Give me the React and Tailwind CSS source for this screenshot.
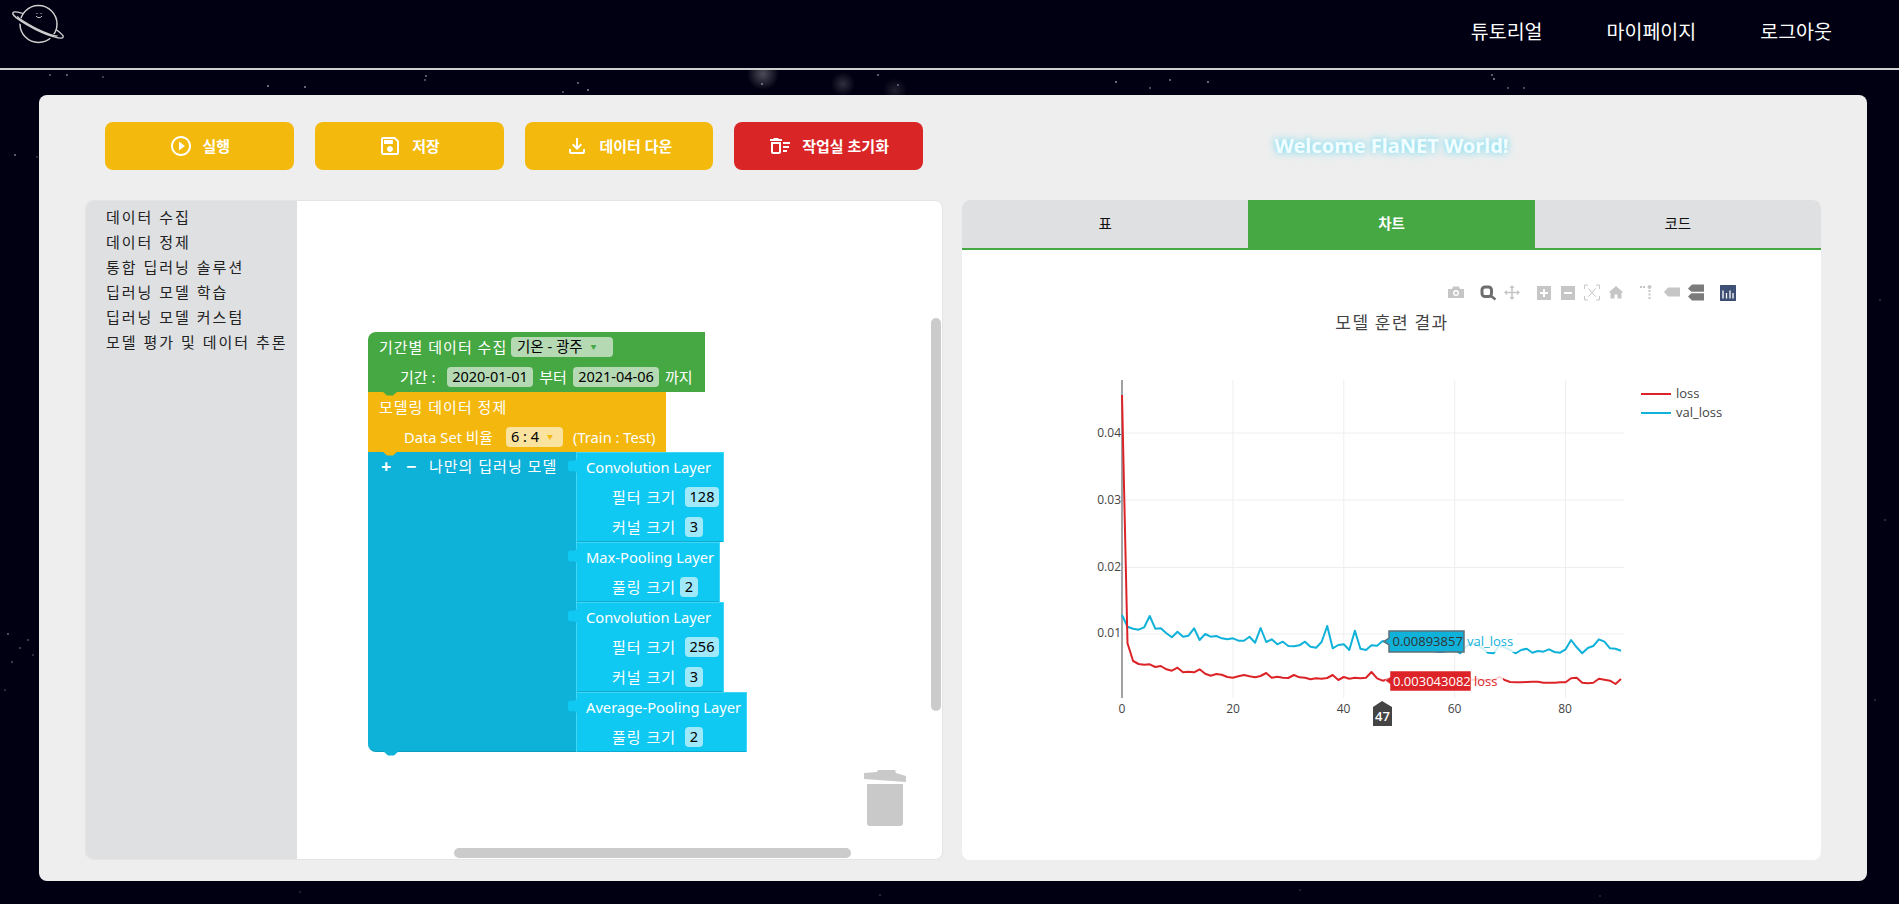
import { MdOutlinePlayCircleOutline, MdOutlineSave, MdOutlineFileDownload, MdOutlineDeleteSweep } from 'react-icons/md';

const stars = [
  [50, 75, 0.5], [67, 75, 0.6], [103, 77, 0.4], [268, 86, 0.7], [305, 87, 0.7], [425, 80, 0.5], [578, 83, 0.6], [588, 90, 0.7], [563, 92, 0.5],
  [426, 76, 0.6], [762, 84, 0.6], [878, 75, 0.6], [898, 85, 0.5], [1116, 82, 0.7], [1170, 80, 0.6], [1150, 88, 0.5], [1208, 82, 0.7], [1492, 75, 0.6],
  [1494, 79, 0.7], [1508, 88, 0.5], [1524, 88, 0.5], [15, 155, 0.6], [37, 157, 0.3], [8, 634, 0.5], [20, 648, 0.4], [28, 640, 0.4], [12, 662, 0.4],
  [33, 655, 0.3], [5, 690, 0.3], [1880, 300, 0.25], [1885, 520, 0.3], [1875, 700, 0.25], [300, 892, 0.2], [880, 895, 0.25], [1300, 890, 0.2], [1600, 896, 0.2],
];

const valLoss = [765, 800, 806, 809, 802, 768, 806, 805, 820, 832, 815, 830, 827, 805, 840, 822, 830, 828, 835, 838, 835, 842, 842, 830, 848, 804, 846, 838, 853, 845, 858, 859, 856, 845, 860, 863, 846, 798, 865, 855, 853, 870, 812, 866, 870, 856, 857, 843, 850, 855, 850, 860, 858, 862, 855, 862, 870, 876, 876, 862, 870, 880, 860, 850, 855, 865, 878, 880, 858, 862, 870, 880, 870, 866, 878, 873, 875, 868, 876, 878, 868, 840, 862, 880, 864, 858, 838, 845, 865, 866, 872];
const loss = [105, 850, 903, 912, 914, 913, 921, 918, 928, 932, 923, 937, 935, 937, 928, 941, 947, 942, 944, 951, 953, 949, 945, 949, 952, 948, 939, 953, 950, 953, 954, 945, 952, 953, 958, 955, 956, 954, 945, 960, 951, 956, 953, 955, 953, 936, 955, 962, 958, 960, 958, 960, 962, 958, 960, 962, 958, 960, 962, 960, 958, 960, 962, 960, 958, 960, 960, 962, 950, 960, 966, 967, 967, 966, 965, 965, 968, 968, 968, 967, 967, 955, 953, 968, 970, 968, 956, 959, 962, 972, 957];

const points = (list) =>
  list.map((z, i) => `${(1122 + 5.545 * i).toFixed(1)},${(360 + z / 3).toFixed(1)}`).join(' ');

function Logo() {
  return (
    <svg width="70" height="50" viewBox="0 0 70 50" fill="none" stroke="#cfcfcf" strokeWidth="1.5" className="ml-0 -mt-[18px]">
      <g transform="rotate(26 38 25)">
        <ellipse cx="38" cy="25" rx="28" ry="5" />
      </g>
      <circle cx="38.500" cy="24" r="18.500" fill="#000012" />
      <g transform="rotate(26 38 25)">
        <path d="M10 25a28 5 0 0 0 56 0" stroke="#000012" strokeWidth="5" />
        <path d="M10 25a28 5 0 0 0 56 0" />
        <path d="M16 26a22 3 0 0 0 44 0" />
      </g>
      <path d="M36 16a3.500 3.500 0 0 0 6 0" strokeWidth="1" />
      <path d="M37 13v1M41 13v1" strokeWidth="1" />
    </svg>
  );
}

function ActionButton({ icon: Icon, label, red }) {
  return (
    <button className={`w-[188.75px] h-12 rounded-lg flex items-center justify-center gap-[10px] text-white text-[15px] font-semibold ${red ? 'bg-[#da2527]' : 'bg-[#f3b90c]'}`}>
      <Icon size={24} />
      {label}
    </button>
  );
}

function Field({ children, className }) {
  return <span className={`h-5 rounded-[4px] text-black flex items-center text-[14.500px] tracking-normal ${className}`}>{children}</span>;
}

function Notch({ color, className }) {
  return (
    <svg width="16" height="5" viewBox="0 0 16 5" className={`absolute z-10 ${className}`}>
      <path d="M0 0h16l-5 4.500h-6z" fill={color} />
    </svg>
  );
}

function InnerBlock({ width, height, title, rows }) {
  return (
    <div className={`relative box-border bg-[#0fc9f3] border-t border-x border-[#3fd6f7] shadow-[inset_0_-1px_0_#0cabd0] ${width} ${height}`}>
      <svg width="9" height="14" viewBox="0 0 9 14" className="absolute -left-[9px] top-[6px]">
        <path d="M9 0C7 2 5 2 2 1.500L0 3v8l2 1.500C5 12 7 12 9 14z" fill="#0fc9f3" />
      </svg>
      <div className="h-[29px] flex items-center pl-[9px] text-[14.700px] whitespace-nowrap">{title}</div>
      {rows.map((row) => (
        <div key={row.label} className="h-[30px] flex items-center pl-[35px]">
          <span className="w-[62px] tracking-[1px] whitespace-nowrap">{row.label}</span>
          <Field className={`justify-center bg-[#9fe9fa] ${row.fieldClass}`}>{row.value}</Field>
        </div>
      ))}
    </div>
  );
}

function Blocks() {
  return (
    <div className="ml-[71px] mt-[131px] w-[380px] text-white text-[15px]">
      {/* data collect */}
      <div className="relative box-border w-[337px] h-[60px] bg-[#46a843] rounded-tl-lg">
        <div className="h-[30px] flex items-center pl-[11px] gap-[5px]">
          <span className="w-[127px] tracking-[1px] whitespace-nowrap">기간별 데이터 수집</span>
          <Field className="w-[102px] bg-[#b5d9b3] pl-[6px] gap-[8px] whitespace-nowrap">기온 - 광주 <span className="text-[6px] text-[#46a843]">▼</span></Field>
        </div>
        <div className="h-[30px] flex items-center pl-[32px]">
          <span className="w-[47px]">기간 :</span>
          <Field className="w-[86px] justify-center bg-[#b5d9b3]">2020-01-01</Field>
          <span className="w-[40px] text-center">부터</span>
          <Field className="w-[86px] justify-center bg-[#b5d9b3]">2021-04-06</Field>
          <span className="ml-[6px]">까지</span>
        </div>
        <Notch color="#46a843" className="left-[14px] -bottom-[4px]" />
      </div>
      {/* data preprocess */}
      <div className="relative w-[298px] h-[60px] bg-[#f3b70d]">
        <div className="h-[30px] flex items-center pl-[11px] tracking-[1px] whitespace-nowrap">모델링 데이터 정제</div>
        <div className="h-[30px] flex items-center pl-[36px]">
          <span className="w-[102px] text-[14.700px] whitespace-nowrap">Data Set 비율</span>
          <Field className="w-[57px] bg-[#fae39f] pl-[5px] gap-[8px]">6 : 4 <span className="text-[6px] text-[#f3b70d]">▼</span></Field>
          <span className="ml-[10px] text-[14.700px] whitespace-nowrap">(Train : Test)</span>
        </div>
        <Notch color="#f3b70d" className="left-[14px] -bottom-[4px]" />
      </div>
      {/* custom model */}
      <div className="flex items-start">
        <div className="relative box-border w-[208px] h-[300px] bg-[#0eb1d8] rounded-bl-lg border-b border-b-[#0b9dc0]">
          <div className="h-[28px] flex items-center pl-[13px] font-bold">
            <span className="w-[25px] text-[18px]">+</span>
            <span className="w-[23px] text-[18px]">−</span>
            <span className="font-normal tracking-[1px] whitespace-nowrap">나만의 딥러닝 모델</span>
          </div>
          <Notch color="#0eb1d8" className="left-[15px] -bottom-[5px]" />
        </div>
        <div className="flex flex-col">
          <InnerBlock
            width="w-[148px]"
            height="h-[90px]"
            title="Convolution Layer"
            rows={[
              { label: '필터 크기', value: '128', fieldClass: 'w-[34px] ml-[11px]' },
              { label: '커널 크기', value: '3', fieldClass: 'w-[18px] ml-[11px]' },
            ]}
          />
          <InnerBlock
            width="w-[144px]"
            height="h-[60px]"
            title="Max-Pooling Layer"
            rows={[{ label: '풀링 크기', value: '2', fieldClass: 'w-[18px] ml-[6px]' }]}
          />
          <InnerBlock
            width="w-[148px]"
            height="h-[90px]"
            title="Convolution Layer"
            rows={[
              { label: '필터 크기', value: '256', fieldClass: 'w-[34px] ml-[11px]' },
              { label: '커널 크기', value: '3', fieldClass: 'w-[18px] ml-[11px]' },
            ]}
          />
          <InnerBlock
            width="w-[171px]"
            height="h-[60px]"
            title="Average-Pooling Layer"
            rows={[{ label: '풀링 크기', value: '2', fieldClass: 'w-[18px] ml-[11px]' }]}
          />
        </div>
      </div>
    </div>
  );
}

function Modebar() {
  const faint = '#c6c6c6';
  return (
    <g>
      {/* camera */}
      <path d="M1448 289h4l1-2.500h6l1 2.500h4v9h-16z" fill={faint} />
      <circle cx="1456" cy="293" r="3" fill="#fff" />
      <circle cx="1456" cy="293" r="1.600" fill={faint} />
      {/* zoom */}
      <rect x="1482" y="287" width="9.500" height="9.500" rx="3" fill="none" stroke="#6e6e6e" strokeWidth="3" />
      <path d="M1491 296l4.500 3.500" stroke="#6e6e6e" strokeWidth="2.500" />
      {/* pan */}
      <path d="M1512 286v13M1505 292.500h14" stroke={faint} strokeWidth="1.600" />
      <path d="M1509.500 288l2.500-3 2.500 3zM1509.500 297l2.500 3 2.500-3zM1507 290l-3 2.500 3 2.500zM1517 290l3 2.500-3 2.500z" fill={faint} />
      {/* zoom in / out */}
      <rect x="1537" y="286" width="14" height="14" fill={faint} />
      <path d="M1540 293h8M1544 289v8" stroke="#fff" strokeWidth="2" />
      <rect x="1561" y="286" width="14" height="14" fill={faint} />
      <path d="M1564 293h8" stroke="#fff" strokeWidth="2" />
      {/* autoscale */}
      <path d="M1588 285h-3.500v4M1596 285h3.500v4M1588 300h-3.500v-4M1596 300h3.500v-4M1588.500 288.500l7 8M1595.500 288.500l-7 8" fill="none" stroke={faint} strokeWidth="1" />
      {/* home */}
      <path d="M1616 286l7.500 6.500h-2v6h-4v-4h-3v4h-4v-6h-2z" fill={faint} />
      {/* spike lines */}
      <circle cx="1649.500" cy="287" r="2" fill={faint} />
      <path d="M1640 287h5" stroke={faint} strokeWidth="2" strokeDasharray="2 1" />
      <path d="M1649.500 290v10" stroke={faint} strokeWidth="2" strokeDasharray="2 1.500" />
      {/* closest / compare */}
      <path d="M1664 292l4-4.500h12v9h-12z" fill={faint} />
      <path d="M1688 288.500l4-4h12v8h-12zM1688 296.500l4-4h12v8h-12z" fill="#7b7b7b" />
      <path d="M1688 292.500h16" stroke="#fff" strokeWidth="1.500" />
      {/* plotly */}
      <rect x="1720" y="285" width="16" height="16" fill="#3d4f73" rx="0.500" />
      <path d="M1723 290.500v8M1726.500 293v5.500M1730 290.500v8M1733 293v5.500" stroke="#fff" strokeWidth="1.300" />
      <path d="M1723 287.800h.1M1726.500 287.800h.1M1730 287.800h.1M1733 287.800h.1M1723 289.300h.1M1726.500 289.800h.1M1730 289.300h.1M1733 289.800h.1" stroke="#7fd0d8" strokeWidth="1.200" />
    </g>
  );
}

function Chart() {
  const sans = "font-['Open_Sans',sans-serif]";
  return (
    <svg viewBox="962 250 859 610" width="859" height="610" className={`block ${sans}`}>
      <Modebar />
      <text x="1392" y="329" textAnchor="middle" fontSize="17" fill="#444" letterSpacing="1.500" className="font-['Noto_Sans_CJK_KR',sans-serif]">모델 훈련 결과</text>
      {/* grid */}
      {[433, 500, 567.500, 634].map((y) => (
        <line key={y} x1="1122" x2="1624" y1={y} y2={y} stroke="#eee" />
      ))}
      {[1232.900, 1343.800, 1454.700, 1565.600].map((x) => (
        <line key={x} x1={x} x2={x} y1="380" y2="698" stroke="#eee" />
      ))}
      <line x1="1122" x2="1122" y1="380" y2="698" stroke="#444" />
      {/* ticks */}
      {[['0.04', 437], ['0.03', 504], ['0.02', 571], ['0.01', 637]].map(([t, y]) => (
        <text key={t} x="1121" y={y} textAnchor="end" fontSize="12" fill="#444">{t}</text>
      ))}
      {[['0', 1122], ['20', 1233], ['40', 1343.500], ['60', 1454.500], ['80', 1565]].map(([t, x]) => (
        <text key={t} x={x} y="713" textAnchor="middle" fontSize="12" fill="#444">{t}</text>
      ))}
      {/* series */}
      <polyline points={points(valLoss)} fill="none" stroke="#10b2da" strokeWidth="2" strokeLinejoin="round" />
      <polyline points={points(loss)} fill="none" stroke="#dc2428" strokeWidth="2" strokeLinejoin="round" />
      {/* legend */}
      <line x1="1641" x2="1671" y1="394" y2="394" stroke="#dc2428" strokeWidth="2" />
      <text x="1676" y="398" fontSize="13" fill="#444">loss</text>
      <line x1="1641" x2="1671" y1="413" y2="413" stroke="#10b2da" strokeWidth="2" />
      <text x="1676" y="417" fontSize="13" fill="#444">val_loss</text>
      {/* hover labels */}
      <rect x="1464" y="631" width="52" height="21" fill="#fff" opacity="0.8" />
      <path d="M1389 631h75v21h-75v-7l-5-3.500 5-3.500z" fill="#10b2da" stroke="#5f6f78" strokeWidth="1.500" />
      <text x="1392.500" y="646" fontSize="13" fill="#333">0.00893857</text>
      <text x="1467" y="646" fontSize="13" fill="#10b2da">val_loss</text>
      <rect x="1471" y="671" width="32" height="20" fill="#fff" opacity="0.8" />
      <path d="M1390 671h81v20h-81v-7l-5-3.500 5-3.500z" fill="#dc2428" stroke="#fff" strokeWidth="0.500" />
      <text x="1393" y="685.500" fontSize="13" fill="#fff">0.003043082</text>
      <text x="1474" y="685.500" fontSize="13" fill="#dc2428">loss</text>
      <path d="M1373 707l9-6 10 6v19h-19z" fill="#444" />
      <text x="1382.500" y="721" textAnchor="middle" fontSize="13" fontWeight="600" fill="#fff">47</text>
    </svg>
  );
}

export default function App() {
  return (
    <div className="relative w-full h-[904px] overflow-hidden bg-[#000012] font-['Noto_Sans','Noto_Sans_CJK_KR',sans-serif]">
      <svg className="absolute inset-0" width="1899" height="904">
        <defs>
          <radialGradient id="glow">
            <stop offset="0" stopColor="#fff" stopOpacity="0.3" />
            <stop offset="1" stopColor="#fff" stopOpacity="0" />
          </radialGradient>
        </defs>
        {stars.map(([x, y, o]) => (
          <circle key={`${x}-${y}`} cx={x} cy={y} r="0.900" fill="#d8dce8" opacity={o} />
        ))}
        <circle cx="763" cy="74" r="16" fill="url(#glow)" />
        <circle cx="843" cy="84" r="12" fill="url(#glow)" opacity="0.6" />
        <circle cx="895" cy="90" r="12" fill="url(#glow)" opacity="0.4" />
      </svg>

      <header className="relative h-[70px] bg-[#000012] border-b-2 border-[#cfcfcf] flex items-center justify-between text-white text-[19.500px]">
        <Logo />
        <nav className="flex items-center gap-[64px] pr-[67px] -mt-[5px]">
          <a>튜토리얼</a>
          <a>마이페이지</a>
          <a>로그아웃</a>
        </nav>
      </header>

      <main className="relative ml-[39px] mt-[25px] w-[1828px] h-[786px] bg-[#eeeeee] rounded-lg pt-[27px]">
        <div className="flex items-center pl-[66px]">
          <div className="flex gap-[21px]">
            <ActionButton icon={MdOutlinePlayCircleOutline} label="실행" />
            <ActionButton icon={MdOutlineSave} label="저장" />
            <ActionButton icon={MdOutlineFileDownload} label="데이터 다운" />
            <ActionButton icon={MdOutlineDeleteSweep} label="작업실 초기화" red />
          </div>
          <div className="ml-[39px] w-[859px] text-center text-[#f2fdff] text-[20px] font-bold [text-shadow:0_0_9px_#7fdcf0,0_0_5px_#a5e8f5]">
            Welcome FlaNET World!
          </div>
        </div>

        <div className="flex gap-[19px] ml-[46px] mt-[30px] h-[660px]">
          {/* block editor */}
          <section className="relative w-[858px] flex rounded-lg overflow-hidden bg-white border border-[#e4e4e4]">
            <aside className="w-[211px] shrink-0 bg-[#dfe0e2] pl-[20px] pt-[4px] text-[#222] text-[15px] tracking-[2px]">
              {['데이터 수집', '데이터 정제', '통합 딥러닝 솔루션', '딥러닝 모델 학습', '딥러닝 모델 커스텀', '모델 평가 및 데이터 추론'].map((item) => (
                <div key={item} className="h-[25px] leading-[25px] whitespace-nowrap">{item}</div>
              ))}
            </aside>
            <Blocks />
            {/* scrollbars */}
            <div className="absolute right-[1px] top-[117px] w-[10px] h-[393px] rounded-full bg-[#cbcbcb]" />
            <div className="absolute left-[368px] bottom-[1px] w-[397px] h-[10px] rounded-full bg-[#cbcbcb]" />
            {/* trash */}
            <svg width="44" height="58" viewBox="0 0 44 58" className="absolute right-[34px] bottom-[31px]">
              <path d="M0 3l13-1 1-2h17l1 3 10 3v6L0 9z" fill="#c9c9c9" />
              <path d="M3 14h36v39a3 3 0 0 1-3 3H6a3 3 0 0 1-3-3z" fill="#c9c9c9" />
            </svg>
          </section>

          {/* result panel */}
          <section className="w-[859px] rounded-lg overflow-hidden bg-white">
            <div className="flex h-[50px] border-b-2 border-[#46a843] text-[14.500px] text-[#111]">
              <div className="flex-1 flex items-center justify-center bg-[#dfe0e2]">표</div>
              <div className="flex-1 flex items-center justify-center bg-[#46a843] text-white font-bold">차트</div>
              <div className="flex-1 flex items-center justify-center bg-[#dfe0e2]">코드</div>
            </div>
            <Chart />
          </section>
        </div>
      </main>
    </div>
  );
}
